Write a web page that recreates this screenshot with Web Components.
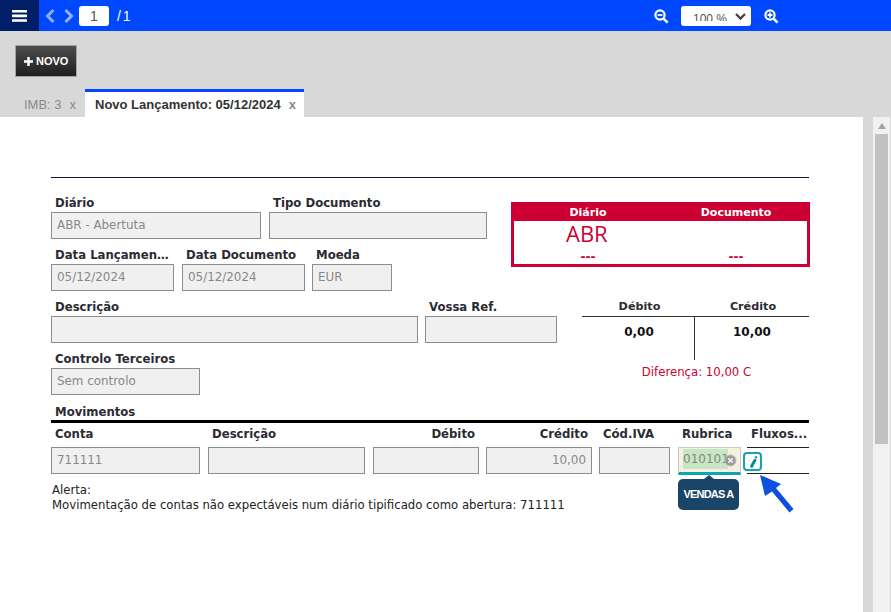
<!DOCTYPE html>
<html lang="pt">
<head>
<meta charset="utf-8">
<title>Novo Lançamento</title>
<style>
  html, body { margin: 0; padding: 0; height: 612px; overflow: hidden; background: #d8d8d8; }
  body { font-family: "DejaVu Sans", sans-serif; display: flex; flex-direction: column; }
</style>
</head>
<body>
<app-toolbar></app-toolbar>
<app-actions></app-actions>
<app-tabs></app-tabs>
<app-main>
  <lancamento-form></lancamento-form>
</app-main>

<script>
class AppToolbar extends HTMLElement {
  constructor() {
    super()
    this.attachShadow({ mode: 'open' }).innerHTML = `
      <style>
        :host { display: flex; align-items: center; height: 31px; background: #0048ff; font-family: "Liberation Sans", sans-serif; color: #fff; }
        .menu { width: 39px; height: 31px; background: #001f66; display: flex; align-items: center; justify-content: center; }
        .nav { display: flex; gap: 9px; margin-left: 6px; }
        .page { width: 30px; height: 20px; margin-left: 5px; background: #fff; border-radius: 3px; color: #555; font-size: 14px; line-height: 20px; text-align: center; }
        .total { margin-left: 8px; font-size: 14px; word-spacing: -2px; }
        .zoom { margin-left: auto; display: flex; align-items: center; margin-right: 112px; }
        .zoom > svg { margin-top: 2px; }
        .select { width: 70px; height: 20px; margin: 0 13px 0 12px; background: #fff; border-radius: 3px; color: #555; font-size: 12px; position: relative; box-sizing: border-box; padding-left: 12px; }
        .select span { display: block; height: 15px; overflow: hidden; line-height: 26px; }
        .select svg { position: absolute; right: 5px; top: 7px; }
        svg { display: block; }
      </style>
      <div class="menu">
        <svg width="15" height="12" viewBox="0 0 15 12" fill="#fff"><rect width="15" height="2.6" rx=".6"/><rect y="4.6" width="15" height="2.6" rx=".6"/><rect y="9.2" width="15" height="2.6" rx=".6"/></svg>
      </div>
      <div class="nav">
        <svg width="10" height="14" viewBox="0 0 10 14" fill="none" stroke="#8fb0ff" stroke-width="3"><path d="M8.500 1 2.500 7l6 6"/></svg>
        <svg width="10" height="14" viewBox="0 0 10 14" fill="none" stroke="#8fb0ff" stroke-width="3"><path d="M1.500 1l6 6-6 6"/></svg>
      </div>
      <div class="page">1</div>
      <div class="total">/ 1</div>
      <div class="zoom">
        <svg width="15" height="15" viewBox="0 0 15 15" fill="none" stroke="#fff"><circle cx="6" cy="6" r="4.600" stroke-width="2.200"/><path d="M3.600 6h4.800" stroke-width="1.800"/><path d="M9.600 9.600l4 4" stroke-width="2.600"/></svg>
        <div class="select"><span>100 %</span>
          <svg width="11" height="7" viewBox="0 0 11 7" fill="none" stroke="#444" stroke-width="2.400"><path d="M1 1l4.500 4.500L10 1"/></svg>
        </div>
        <svg width="15" height="15" viewBox="0 0 15 15" fill="none" stroke="#fff"><circle cx="6" cy="6" r="4.600" stroke-width="2.200"/><path d="M3.600 6h4.800M6 3.600v4.800" stroke-width="1.800"/><path d="M9.600 9.600l4 4" stroke-width="2.600"/></svg>
      </div>`
  }
}
customElements.define('app-toolbar', AppToolbar)

class AppActions extends HTMLElement {
  constructor() {
    super()
    this.attachShadow({ mode: 'open' }).innerHTML = `
      <style>
        :host { display: block; height: 58px; padding: 14px 0 0 15px; box-sizing: border-box; font-family: "Liberation Sans", sans-serif; }
        .novo { display: inline-flex; align-items: center; gap: 3px; box-sizing: border-box; width: 62px; height: 32px; padding-left: 8px; background: linear-gradient(#4c4c4c, #1f1f1f); border: 1px solid #a4a4a4; color: #fff; font-size: 11px; font-weight: bold; }
      </style>
      <div class="novo">
        <svg width="9" height="9" viewBox="0 0 10 10" fill="#fff"><path d="M3.600 0h2.800v3.600H10v2.800H6.400V10H3.600V6.400H0V3.600h3.600z"/></svg>
        NOVO
      </div>`
  }
}
customElements.define('app-actions', AppActions)

class AppTabs extends HTMLElement {
  constructor() {
    super()
    this.attachShadow({ mode: 'open' }).innerHTML = `
      <style>
        :host { display: flex; height: 28px; padding-left: 24px; font-family: "Liberation Sans", sans-serif; font-size: 13px; }
        .tab { display: flex; align-items: center; box-sizing: border-box; height: 28px; padding-top: 3px; color: #8a8a8a; }
        .tab.off { width: 61px; }
        .tab.on { width: 219px; padding-left: 10px; background: #fff; border-top: 3px solid #0048ff; padding-top: 0; color: #333; font-weight: bold; }
        .x { color: #8a8a8a; font-size: 13px; margin-left: 8px; }
      </style>
      <div class="tab off">IMB: 3<span class="x">x</span></div>
      <div class="tab on">Novo Lançamento: 05/12/2024<span class="x">x</span></div>`
  }
}
customElements.define('app-tabs', AppTabs)

class AppMain extends HTMLElement {
  constructor() {
    super()
    this.attachShadow({ mode: 'open' }).innerHTML = `
      <style>
        :host { display: flex; flex: 1; min-height: 0; }
        .content { flex: 1; min-width: 0; background: #fff; padding: 60px 54px 0 51px; }
        .gutter { flex: none; width: 10px; background: #d8d8d8; }
        .bar { flex: none; width: 17px; margin-right: 1px; background: #f1f1f1; padding: 0 2px; box-sizing: border-box; }
        .arrow { width: 0; height: 0; margin: 6px auto 5px; border: 4px solid transparent; border-top: 0; border-bottom: 6px solid #a3a3a3; }
        .thumb { height: 310px; background: #c1c1c1; }
      </style>
      <div class="content"><slot></slot></div>
      <div class="gutter"></div>
      <div class="bar"><div class="arrow"></div><div class="thumb"></div></div>`
  }
}
customElements.define('app-main', AppMain)

class FormField extends HTMLElement {
  constructor() {
    super()
    const align = this.getAttribute('align') || 'left'
    this.attachShadow({ mode: 'open' }).innerHTML = `
      <style>
        :host { display: block; width: ${this.getAttribute('w')}px; flex: none; margin-bottom: 9px; font-size: 11.7px; }
        .label { height: var(--label-h, 16px); line-height: 14px; padding: 0 4px; font-weight: bold; color: #2b2b33; white-space: nowrap; overflow: hidden; text-overflow: ellipsis; text-align: ${this.getAttribute('label-align') || 'left'}; }
        .input { box-sizing: border-box; height: 27px; line-height: 25px; padding: 0 5px; background: #f0f0f0; border: 1px solid #8c8c8c; color: #888; font-size: 11.9px; white-space: nowrap; text-align: ${align}; }
      </style>
      <div class="label">${this.getAttribute('label')}</div>
      <div class="input">${this.getAttribute('value') || ''}</div>`
  }
}
customElements.define('form-field', FormField)

class JournalBox extends HTMLElement {
  constructor() {
    super()
    this.attachShadow({ mode: 'open' }).innerHTML = `
      <style>
        :host { display: block; box-sizing: border-box; width: 299px; height: 65px; margin: 6px 0 0 24px; flex: none; border: 3px solid #cc0033; color: #cc0033; font-size: 11px; }
        .head { display: grid; grid-template-columns: 148px 1fr; height: 16px; line-height: 15px; background: #cc0033; color: #fff; font-weight: bold; text-align: center; }
        .head span + span, .dash span + span { padding-left: 3px; }
        .abr { height: 29px; padding-left: 52px; font-size: 22px; line-height: 25px; font-family: "Open Sans", "DejaVu Sans", sans-serif; }
        .dash { display: grid; grid-template-columns: 148px 1fr; line-height: 14px; font-size: 12px; font-weight: bold; text-align: center; }
      </style>
      <div class="head"><span>Diário</span><span>Documento</span></div>
      <div class="abr">ABR</div>
      <div class="dash"><span>---</span><span>---</span></div>`
  }
}
customElements.define('journal-box', JournalBox)

class TotalsPanel extends HTMLElement {
  constructor() {
    super()
    this.attachShadow({ mode: 'open' }).innerHTML = `
      <style>
        :host { display: block; width: 227px; margin: 0 0 0 25px; flex: none; font-size: 11.7px; color: #2b2b33; }
        .cols { display: grid; grid-template-columns: 113px 1fr; text-align: center; }
        .h { height: 16px; font-size: 11.2px; line-height: 14px; font-weight: bold; border-bottom: 1px solid #333; }
        .v { height: 43px; line-height: 31px; font-weight: bold; font-size: 12px; color: #111; }
        .v.l { border-right: 1px solid #333; }
        .l, .h.first { padding-left: 2px; }
        .h.second { padding-left: 2px; }
        .dif { margin-top: 5px; text-align: center; padding-left: 2px; color: #cc0033; }
      </style>
      <div class="cols">
        <div class="h first">Débito</div><div class="h second">Crédito</div>
        <div class="v l">0,00</div><div class="v">10,00</div>
      </div>
      <div class="dif">Diferença: 10,00 C</div>`
  }
}
customElements.define('totals-panel', TotalsPanel)

class RubricaCell extends HTMLElement {
  constructor() {
    super()
    this.attachShadow({ mode: 'open' }).innerHTML = `
      <style>
        :host { display: block; position: relative; width: 63px; flex: none; font-size: 11.7px; }
        .label { height: var(--label-h, 16px); line-height: 14px; padding: 0 4px; font-weight: bold; color: #2b2b33; }
        .input { box-sizing: border-box; height: 28px; padding: 1px 0 0 4px; background: #f5f1df; border: 1px solid #c9c9c9; border-bottom: 3px solid #0fa3b8; color: #7f8a7f; font-size: 12px; line-height: 20px; overflow: hidden; white-space: nowrap; }
        .hl { display: block; width: 45px; height: 20px; background: #c9e6c4; }
        .clear { position: absolute; left: 46px; top: 27px; opacity: .85; }
        .tip { position: absolute; left: 0; top: 52px; width: 61px; height: 31px; background: #1a4468; border-radius: 5px; color: #fff; font-family: "Liberation Sans", sans-serif; font-size: 11px; font-weight: bold; letter-spacing: -.8px; line-height: 31px; text-align: center; }
        .tip::before { content: ""; position: absolute; left: 26px; top: -4px; border: 5px solid transparent; border-top: 0; border-bottom: 4px solid #1a4468; }
      </style>
      <div class="label">Rubrica</div>
      <div class="input"><span class="hl">010101</span></div>
      <svg class="clear" width="13" height="13" viewBox="0 0 15 15"><circle cx="7.500" cy="7.500" r="6.500" fill="#8e8e8e" stroke="#c8c8c8"/><path d="M5 5l5 5M10 5l-5 5" stroke="#eee" stroke-width="1.800"/></svg>
      <div class="tip">VENDAS A</div>`
  }
}
customElements.define('rubrica-cell', RubricaCell)

class FluxosCell extends HTMLElement {
  constructor() {
    super()
    this.attachShadow({ mode: 'open' }).innerHTML = `
      <style>
        :host { display: block; position: relative; flex: 1; min-width: 0; margin-left: -5px; font-size: 11.7px; }
        .label { height: var(--label-h, 16px); line-height: 14px; padding-left: 8px; font-weight: bold; color: #2b2b33; white-space: nowrap; }
        .lines { box-sizing: border-box; height: 27px; margin-left: 4px; border-top: 1px solid #222; border-bottom: 1px solid #222; }
        .edit { position: absolute; left: 0; top: 25px; width: 19px; height: 19px; box-sizing: border-box; border: 2px solid #17a2b8; border-radius: 4px; background: #fff; display: flex; align-items: center; justify-content: center; }
      </style>
      <div class="label">Fluxos...</div>
      <div class="lines"></div>
      <div class="edit">
        <svg width="10" height="12" viewBox="0 0 10 12" fill="none" stroke="#0e8aa0" stroke-linecap="round"><path d="M6.900 4.200 3.600 10.200" stroke-width="3"/><path d="M7.800 1.300h.4" stroke-width="2.200"/></svg>
      </div>`
  }
}
customElements.define('fluxos-cell', FluxosCell)

class LancamentoForm extends HTMLElement {
  constructor() {
    super()
    this.attachShadow({ mode: 'open' }).innerHTML = `
      <style>
        :host { display: block; position: relative; font-family: "DejaVu Sans", sans-serif; font-size: 11.7px; color: #222; }
        .rule { height: 1px; background: #14143c; margin-bottom: 18px; }
        .block { display: flex; }
        .left { flex: none; display: flex; flex-direction: column; }
        .row { display: flex; gap: 8px; }
        .mov-title { height: 16px; line-height: 16px; padding-left: 4px; font-weight: bold; color: #2b2b33; }
        .thick { height: 3px; background: #000; }
        .mov { --label-h: 20px; display: flex; gap: 7px; margin-top: 4px; height: 48px; }
        .mov form-field { margin-bottom: 0; }
        .alert { margin-top: 8px; padding-left: 1px; line-height: 15px; color: #222; }
        .pointer { position: absolute; left: 707px; top: 296px; }
      </style>
      <div class="rule"></div>
      <div class="block">
        <div class="left" style="width:436px">
          <div class="row">
            <form-field w="210" label="Diário" value="ABR - Abertuta"></form-field>
            <form-field w="218" label="Tipo Documento"></form-field>
          </div>
          <div class="row">
            <form-field w="123" label="Data Lançamento" value="05/12/2024"></form-field>
            <form-field w="123" label="Data Documento" value="05/12/2024" style="margin-right:-1px"></form-field>
            <form-field w="80" label="Moeda" value="EUR"></form-field>
          </div>
        </div>
        <journal-box></journal-box>
      </div>
      <div class="block">
        <div class="left" style="width:506px">
          <div class="row" style="gap:7px">
            <form-field w="367" label="Descrição"></form-field>
            <form-field w="132" label="Vossa Ref."></form-field>
          </div>
          <form-field w="149" label="Controlo Terceiros" value="Sem controlo"></form-field>
        </div>
        <totals-panel></totals-panel>
      </div>
      <div class="mov-title">Movimentos</div>
      <div class="thick"></div>
      <div class="mov">
        <form-field w="149" label="Conta" value="711111"></form-field>
        <form-field w="157" label="Descrição" style="margin-left:1px"></form-field>
        <form-field w="106" label="Débito" label-align="right" style="margin-left:1px"></form-field>
        <form-field w="106" label="Crédito" value="10,00" align="right" label-align="right"></form-field>
        <form-field w="71" label="Cód.IVA"></form-field>
        <rubrica-cell style="margin-left:1px"></rubrica-cell>
        <fluxos-cell></fluxos-cell>
      </div>
      <div class="alert">Alerta:<br>Movimentação de contas não expectáveis num diário tipificado como abertura: 711111</div>
      <svg class="pointer" width="38" height="42" viewBox="0 0 38 42"><path d="M2 2 23 11 18 15 35.500 36 31.500 39.500 14 18.500 7 23z" fill="#0d50e0"/></svg>`
  }
}
customElements.define('lancamento-form', LancamentoForm)
</script>
</body>
</html>
